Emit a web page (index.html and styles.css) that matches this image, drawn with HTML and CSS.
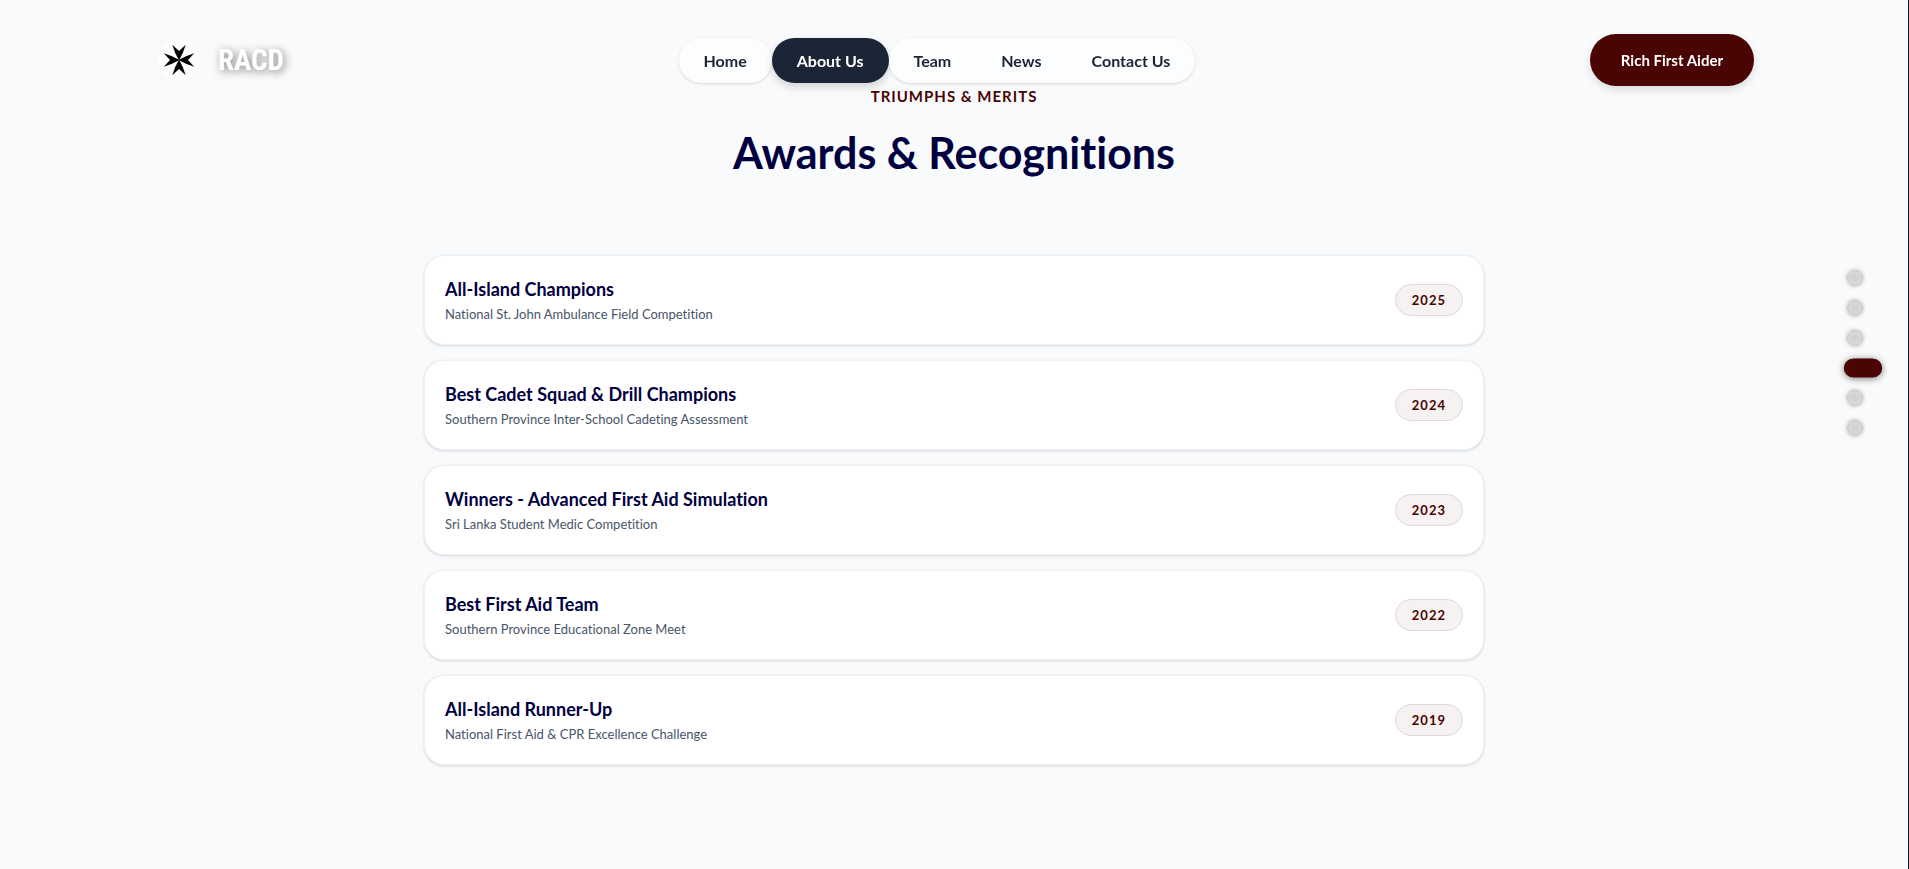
FILE: index.html
```html
<!DOCTYPE html>
<html lang="en">
<head>
    <meta charset="UTF-8">
    <meta name="viewport" content="width=device-width, initial-scale=1.0">
    <title>RACD - Awards &amp; Recognitions</title>
    <link rel="stylesheet" href="styles.css">
</head>
<body>
    <header class="header">
        <a href="#" class="brand">
            <svg class="brand-logo" viewBox="0 0 42 42" aria-hidden="true">
                <circle cx="21" cy="21" r="21" fill="#fdfdfb"/>
                <g fill="#050505">
                    <path id="arm" d="M21 21.5 L17.2 14 L14.3 5.8 L21 12 L27.7 5.8 L24.8 14 Z"/>
                    <use href="#arm" transform="rotate(90 21 21)"/>
                    <use href="#arm" transform="rotate(180 21 21)"/>
                    <use href="#arm" transform="rotate(270 21 21)"/>
                </g>
            </svg>
            <span class="brand-name">RACD</span>
        </a>

        <nav class="nav">
            <div class="nav-group"><a href="#" class="nav-link">Home</a></div>
            <a href="#" class="nav-link active">About Us</a>
            <div class="nav-group">
                <a href="#" class="nav-link">Team</a>
                <a href="#" class="nav-link">News</a>
                <a href="#" class="nav-link">Contact Us</a>
            </div>
        </nav>

        <button type="button" class="cta">Rich First Aider</button>
    </header>

    <main class="slide">
        <p class="kicker">Triumphs &amp; Merits</p>
        <h1 class="title">Awards &amp; Recognitions</h1>

        <ul class="awards">
            <li class="award">
                <div>
                    <h2 class="award-name">All-Island Champions</h2>
                    <p class="award-event">National St. John Ambulance Field Competition</p>
                </div>
                <span class="award-year">2025</span>
            </li>
            <li class="award">
                <div>
                    <h2 class="award-name">Best Cadet Squad &amp; Drill Champions</h2>
                    <p class="award-event">Southern Province Inter-School Cadeting Assessment</p>
                </div>
                <span class="award-year">2024</span>
            </li>
            <li class="award">
                <div>
                    <h2 class="award-name">Winners - Advanced First Aid Simulation</h2>
                    <p class="award-event">Sri Lanka Student Medic Competition</p>
                </div>
                <span class="award-year">2023</span>
            </li>
            <li class="award">
                <div>
                    <h2 class="award-name">Best First Aid Team</h2>
                    <p class="award-event">Southern Province Educational Zone Meet</p>
                </div>
                <span class="award-year">2022</span>
            </li>
            <li class="award">
                <div>
                    <h2 class="award-name">All-Island Runner-Up</h2>
                    <p class="award-event">National First Aid &amp; CPR Excellence Challenge</p>
                </div>
                <span class="award-year">2019</span>
            </li>
        </ul>
    </main>

    <div class="dots">
        <button type="button" class="dot" aria-label="Slide 1"></button>
        <button type="button" class="dot" aria-label="Slide 2"></button>
        <button type="button" class="dot" aria-label="Slide 3"></button>
        <button type="button" class="dot active" aria-label="Slide 4"></button>
        <button type="button" class="dot" aria-label="Slide 5"></button>
        <button type="button" class="dot" aria-label="Slide 6"></button>
    </div>
</body>
</html>
```
FILE: styles.css
```css
* {
    box-sizing: border-box;
    margin: 0;
    padding: 0;
}

body {
    font-family: Lato, 'Open Sans', sans-serif;
    font-variant-ligatures: none;
    background: #f8fafc;
    min-height: 100vh;
    border-right: 1px solid #0f172a;
}

/* header */
.header {
    position: fixed;
    top: 0;
    left: 0;
    right: 0;
    z-index: 10;
    display: flex;
    align-items: center;
    justify-content: space-between;
    padding: 34px 155px 0 158px;
}

.brand {
    display: flex;
    align-items: center;
    gap: 18px;
    text-decoration: none;
}

.brand-logo {
    width: 42px;
    height: 42px;
}

.brand-name {
    font-family: 'Roboto Condensed', 'Liberation Sans Narrow', Roboto, sans-serif;
    font-size: 29px;
    font-weight: 700;
    line-height: 40px;
    color: #fff;
    text-shadow: 2px 2px 8px rgba(0, 0, 0, 0.5);
}

.nav {
    display: flex;
}

.nav-group {
    display: flex;
    background: #fcfdfe;
    border-radius: 23px;
    box-shadow: 0 1px 3px rgba(0, 0, 0, 0.14);
}

.nav-link {
    padding: 0 25px;
    font-size: 16px;
    font-weight: 700;
    line-height: 45px;
    color: #1c2536;
    text-decoration: none;
}

.nav-link.active {
    background: #1c2536;
    color: #fff;
    border-radius: 23px;
    box-shadow: 0 4px 8px rgba(0, 0, 0, 0.16);
}

.cta {
    padding: 0 31px;
    font-family: inherit;
    font-size: 15px;
    font-weight: 700;
    line-height: 52px;
    color: #fff;
    background: #4a0404;
    border: none;
    border-radius: 26px;
    box-shadow: 0 4px 8px rgba(0, 0, 0, 0.12);
}

/* awards slide */
.slide {
    padding: 84px 24px 0;
}

.kicker {
    font-size: 15px;
    font-weight: 700;
    line-height: 24px;
    letter-spacing: 1px;
    text-align: center;
    text-transform: uppercase;
    color: #4a0404;
}

.title {
    margin-top: 15px;
    font-size: 43px;
    font-weight: 700;
    line-height: 60px;
    text-align: center;
    color: #00003f;
}

.awards {
    display: flex;
    flex-direction: column;
    gap: 15px;
    max-width: 1060px;
    margin: 72px auto 0;
    list-style: none;
}

.award {
    display: flex;
    align-items: center;
    justify-content: space-between;
    padding: 20px;
    background: #fff;
    border: 1px solid #edf1f6;
    border-radius: 20px;
    box-shadow: 0 1px 3px rgba(0, 0, 0, 0.14);
}

.award-name {
    font-size: 18px;
    font-weight: 700;
    line-height: 26px;
    color: #00003f;
}

.award-event {
    margin-top: 2px;
    font-size: 13px;
    line-height: 20px;
    color: #475569;
}

.award-year {
    padding: 0 16px;
    font-size: 13px;
    font-weight: 700;
    line-height: 30px;
    letter-spacing: 1px;
    color: #4a0404;
    background: #f6f2f2;
    border: 1px solid #e3d8d9;
    border-radius: 16px;
}

/* slide navigation dots */
.dots {
    position: fixed;
    top: 270px;
    right: 30px;
    display: flex;
    flex-direction: column;
    gap: 14px;
}

.dot {
    width: 16px;
    height: 16px;
    border: 1px solid #c2c4c5;
    border-radius: 8px;
    background: radial-gradient(#cfd1d1, #dcdedd);
    box-shadow: 0 0 4px rgba(0, 0, 0, 0.3);
}

.dot.active {
    width: 32px;
    border-color: #4a0404;
    background: #4a0404;
    box-shadow: 0 1px 6px rgba(0, 0, 0, 0.5);
    transform: scale(1.2);
}
```
